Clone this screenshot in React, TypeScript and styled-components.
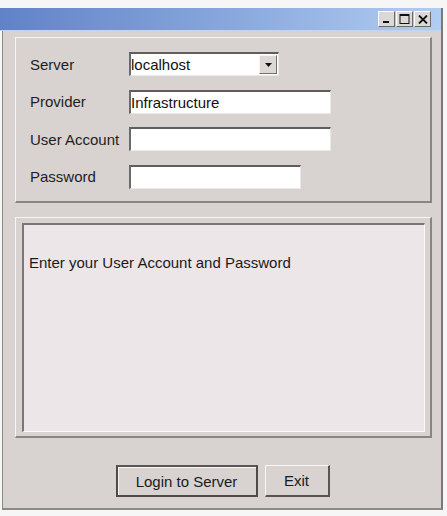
import styled, { createGlobalStyle } from 'styled-components';

const GlobalStyle = createGlobalStyle`
  html, body {
    margin: 0;
    padding: 0;
    background: #f6f6f6;
    font-family: "Liberation Sans", Arial, sans-serif;
  }
`;

const Window = styled.div`
  margin: 8px 0 0 2px;
  width: 441px;
  height: 502px;
  box-sizing: border-box;
  display: flex;
  flex-direction: column;
  background: #d8d3d1;
  border-left: 1px solid #8c8888;
  border-right: 2px solid #7c7878;
  border-bottom: 2px solid #8c8888;
`;

const TitleBar = styled.div`
  height: 22px;
  margin-left: -3px;
  display: flex;
  justify-content: flex-end;
  align-items: center;
  gap: 1px;
  padding-right: 10px;
  background: linear-gradient(90deg, #6282c8 0%, #86a6dc 50%, #b2cdf2 100%);
  border-bottom: 1px solid #c4d4ec;
`;

const TitleButton = styled.div`
  width: 17px;
  height: 16px;
  box-sizing: border-box;
  background: #dcd8d6;
  border-top: 1px solid #ffffff;
  border-left: 1px solid #ffffff;
  border-right: 1px solid #6a6a6a;
  border-bottom: 1px solid #6a6a6a;
  display: flex;
  align-items: center;
  justify-content: center;
`;

const Body = styled.div`
  flex: 1;
  display: flex;
  flex-direction: column;
  padding: 6px 9px 0 12px;
`;

const RaisedPanel = styled.div<{ $height: number }>`
  height: ${(p) => p.$height}px;
  box-sizing: border-box;
  border-top: 1px solid #f6f4f4;
  border-left: 1px solid #f6f4f4;
  border-right: 2px solid #8a8585;
  border-bottom: 2px solid #8a8585;
`;

const FormGrid = styled.div`
  display: grid;
  grid-template-columns: 99px auto;
  grid-auto-rows: 24px;
  row-gap: 13.5px;
  align-items: center;
  padding: 14px 0 0 14px;
`;

const Label = styled.span`
  font-size: 15px;
  color: #1e1e1e;
`;

const Field = styled.div<{ $width: number }>`
  width: ${(p) => p.$width}px;
  height: 24px;
  box-sizing: border-box;
  background: #ffffff;
  border-top: 2px solid #5e5e5e;
  border-left: 2px solid #6a6a6a;
  border-right: 1px solid #ebe8e8;
  border-bottom: 1px solid #ebe8e8;
  display: flex;
  align-items: center;
  font-size: 15px;
  color: #111;
  padding-left: 0;
`;

const FieldText = styled.span`
  flex: 1;
`;

const DropButton = styled.div`
  width: 18px;
  height: 19px;
  margin-right: 1px;
  box-sizing: border-box;
  background: #dcd8d6;
  border-top: 1px solid #f4f4f4;
  border-left: 1px solid #f4f4f4;
  border-right: 1px solid #707070;
  border-bottom: 1px solid #707070;
  display: flex;
  align-items: center;
  justify-content: center;
`;

const MessagePanel = styled(RaisedPanel)`
  margin-top: 14px;
  padding: 5px 5px 4px 6px;
  display: flex;
`;

const MessageArea = styled.div`
  flex: 1;
  box-sizing: border-box;
  background: #ede6e8;
  border-top: 2px solid #7a7676;
  border-left: 2px solid #7a7676;
  border-right: 1px solid #fbfafa;
  border-bottom: 1px solid #fbfafa;
  padding: 29px 0 0 5px;
  font-size: 15px;
  color: #1a1a1a;
`;

const ButtonRow = styled.div`
  display: flex;
  justify-content: center;
  gap: 7px;
  margin-top: 27px;
  padding-right: 2px;
`;

const PushButton = styled.button<{ $width: number }>`
  width: ${(p) => p.$width}px;
  height: 32px;
  box-sizing: border-box;
  background: #d8d3d1;
  border-top: 1px solid #f6f4f4;
  border-left: 1px solid #f6f4f4;
  border-right: 2px solid #585454;
  border-bottom: 2px solid #585454;
  font-family: "Liberation Sans", Arial, sans-serif;
  font-size: 15px;
  color: #1a1a1a;
  padding: 0;
`;

const DefaultButton = styled(PushButton)`
  border: 2px solid #4e4a4a;
  border-top-color: #5a5656;
  box-shadow: inset 1px 1px 0 #f6f4f4;
`;

function App() {
  return (
    <>
      <GlobalStyle />
      <Window>
        <TitleBar>
          <TitleButton>
            <svg width="9" height="10" viewBox="0 0 9 10">
              <rect x="1" y="7" width="6" height="2" fill="#111" />
            </svg>
          </TitleButton>
          <TitleButton>
            <svg width="11" height="10" viewBox="0 0 11 10">
              <rect x="1" y="0.5" width="9" height="9" fill="none" stroke="#111" />
              <rect x="1" y="0.5" width="9" height="1.5" fill="#111" />
            </svg>
          </TitleButton>
          <TitleButton>
            <svg width="10" height="9" viewBox="0 0 10 9">
              <path d="M1 0.5 L9 8.5 M9 0.5 L1 8.5" stroke="#111" strokeWidth="1.8" />
            </svg>
          </TitleButton>
        </TitleBar>
        <Body>
          <RaisedPanel $height={166}>
            <FormGrid>
              <Label>Server</Label>
              <Field $width={150}>
                <FieldText>localhost</FieldText>
                <DropButton>
                  <svg width="7" height="4" viewBox="0 0 7 4">
                    <path d="M0 0 H7 L3.5 4 Z" fill="#111" />
                  </svg>
                </DropButton>
              </Field>
              <Label>Provider</Label>
              <Field $width={202}>
                <FieldText>Infrastructure</FieldText>
              </Field>
              <Label>User Account</Label>
              <Field $width={202} />
              <Label>Password</Label>
              <Field $width={172} />
            </FormGrid>
          </RaisedPanel>
          <MessagePanel $height={221}>
            <MessageArea>Enter your User Account and Password</MessageArea>
          </MessagePanel>
          <ButtonRow>
            <DefaultButton $width={142}>Login to Server</DefaultButton>
            <PushButton $width={65}>Exit</PushButton>
          </ButtonRow>
        </Body>
      </Window>
    </>
  );
}

export default App;
